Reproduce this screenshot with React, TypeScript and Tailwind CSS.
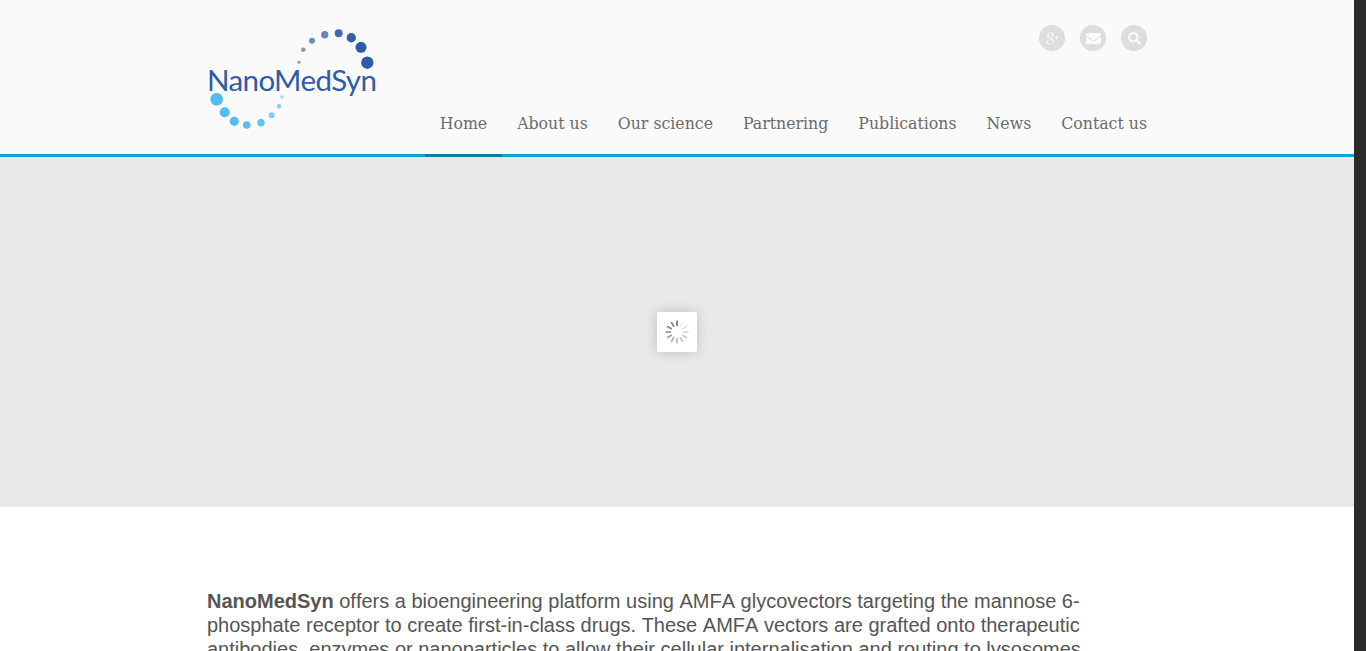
import React from 'react';
import { FaEnvelope, FaSearch } from 'react-icons/fa';
import { TiSocialGooglePlus } from 'react-icons/ti';

const navItems = ['Home', 'About us', 'Our science', 'Partnering', 'Publications', 'News', 'Contact us'];

const darkDots = [
  [367.3, 62.7, 6.2, '#2f5ba8'],
  [361, 47.3, 5.5, '#2f5ba8'],
  [351.3, 37.7, 4.7, '#345ea9'],
  [338.7, 33.3, 4, '#4169af'],
  [324.7, 34.7, 3.7, '#6684bd'],
  [312, 40.7, 3, '#6f8bc1'],
  [303.3, 49.7, 2.3, '#7f98c9'],
  [299, 62.3, 1.8, '#93a9d3'],
] as const;

const lightDots = [
  [216.7, 99.3, 6.3, '#4fbdf0'],
  [224.7, 112.3, 5, '#4fbdf0'],
  [234.3, 121.3, 4.5, '#4fbdf0'],
  [246.7, 125, 3.8, '#55bff0'],
  [261, 122.7, 3.7, '#62c4f1'],
  [271.7, 115.3, 3, '#7ccef3'],
  [279, 106.3, 2.2, '#86d1f4'],
  [282, 97, 1.8, '#a5dcf6'],
] as const;

const Logo = () => (
  <div className="relative w-[172px] h-[105px] mt-[27px]">
    <svg className="absolute left-0 top-0" width="172" height="105" viewBox="207 27 172 105">
      {[...darkDots, ...lightDots].map(([cx, cy, r, fill]) => (
        <circle key={`${cx}-${cy}`} cx={cx} cy={cy} r={r} fill={fill} />
      ))}
    </svg>
    <span className="absolute left-0 top-[33px] font-['Lato',sans-serif] text-[29.5px] leading-[40px] tracking-[-0.6px] text-[#2f5ba8]">
      NanoMedSyn
    </span>
  </div>
);

const Spinner = () => (
  <svg width="24" height="24" viewBox="0 0 24 24">
    {Array.from({ length: 12 }).map((_, i) => (
      <rect
        key={i}
        x="11.2"
        y="0.5"
        width="1.6"
        height="5.5"
        fill="#6f6f6f"
        opacity={1 - ((12 - i) % 12) * 0.08}
        transform={`rotate(${i * 30} 12 12)`}
      />
    ))}
  </svg>
);

const SocialIcon = ({ children }: { children: React.ReactNode }) => (
  <a className="flex w-[26px] h-[26px] items-center justify-center rounded-full bg-[#dddddd] text-[#fafafa]">
    {children}
  </a>
);

export default function App() {
  return (
    <div className="flex h-screen overflow-hidden bg-white">
      <div className="flex-1 min-w-0 overflow-hidden">
        <header className="h-[157px] border-b-[3px] border-[#0ea5d3] bg-[#fafafa]">
          <div className="mx-auto flex h-full w-[940px] justify-between">
            <Logo />
            <div className="flex flex-col items-end">
              <div className="mt-[25px] flex gap-[15px]">
                <SocialIcon>
                  <TiSocialGooglePlus className="w-[20px] h-[20px]" />
                </SocialIcon>
                <SocialIcon>
                  <FaEnvelope className="w-[15px] h-[15px]" />
                </SocialIcon>
                <SocialIcon>
                  <FaSearch className="w-[13px] h-[13px]" />
                </SocialIcon>
              </div>
              <nav className="mt-auto -mr-[15px] flex">
                {navItems.map((item, i) => (
                  <a
                    key={item}
                    className="relative h-[51px] px-[15px] pt-[9px] font-['DejaVu_Serif',serif] text-[15.75px] leading-[24px] text-[#6b6b6b]"
                  >
                    {item}
                    {i === 0 && (
                      <span className="absolute left-0 right-0 -bottom-[3px] h-[3px] bg-[#0b7f9f]" />
                    )}
                  </a>
                ))}
              </nav>
            </div>
          </div>
        </header>

        <section className="flex h-[350px] items-center justify-center border-b border-[#eeeeee] bg-[#e8e8e8]">
          <div className="flex h-[40px] w-[40px] items-center justify-center rounded-[2px] bg-white shadow-[0_0_12px_rgba(0,0,0,0.18)]">
            <Spinner />
          </div>
        </section>

        <main className="mx-auto w-[940px] pt-[82px] font-['Liberation_Sans',sans-serif] text-[20px] leading-[24px] text-[#555555] [font-kerning:none]">
          <p>
            <strong>NanoMedSyn</strong> offers a bioengineering platform using AMFA glycovectors targeting the mannose 6-phosphate receptor to create first-in-class drugs. These AMFA vectors are grafted onto therapeutic antibodies, enzymes or nanoparticles to allow their cellular internalisation and routing to lysosomes
          </p>
        </main>
      </div>
      <div className="w-[12px] shrink-0 bg-[#2a2a2a]" />
    </div>
  );
}
